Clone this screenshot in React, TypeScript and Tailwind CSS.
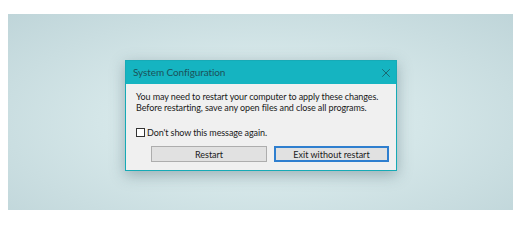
import { X } from "lucide-react";

function Dialog() {
  return (
    <div className="w-[272px] border border-[#16aab6] bg-[#f0f0f0] shadow-[0_4px_14px_rgba(40,70,80,0.35)]">
      {/* title bar */}
      <div className="flex h-[23px] items-center justify-between bg-[#15b4c1] pl-[7px] pr-[3px]">
        <span className="text-[10px] tracking-[-0.1px] text-[#1b525a]">System Configuration</span>
        <X size={14} strokeWidth={1.3} className="text-[#1b525a]" />
      </div>
      <div className="pl-[10px] pr-[7px] pt-[7px] pb-[8px] text-[#1a1a1a]">
        <p className="whitespace-nowrap text-[9px] leading-[11px] tracking-[-0.1px]">
          You may need to restart your computer to apply these changes.
          <br />
          Before restarting, save any open files and close all programs.
        </p>
        <label className="mt-[14px] flex items-center gap-[2px] whitespace-nowrap text-[9px] leading-[11px] tracking-[-0.1px]">
          <span className="h-[9px] w-[9px] border border-[#333] bg-white" />
          Don't show this message again.
        </label>
        <div className="mt-[8px] flex justify-end gap-[7px]">
          <button className="h-[16px] w-[116px] border border-[#adadad] bg-[#e1e1e1] text-[9px] leading-none text-[#1a1a1a]">
            Restart
          </button>
          <button className="h-[16px] w-[115px] border-2 border-[#2f7fcf] bg-[#e1e1e1] text-[9px] leading-none text-[#1a1a1a]">
            Exit without restart
          </button>
        </div>
      </div>
    </div>
  );
}

export default function App() {
  return (
    <div className="h-[224px] w-[530px] bg-white pt-[14px] pl-[8px] font-['Lato',sans-serif]">
      <div className="h-[196px] w-[505px] bg-[radial-gradient(ellipse_at_50%_55%,#e6f2f3_0%,#d4e6e8_45%,#bfd5d9_100%)] pt-[46px] pl-[117px]">
        <Dialog />
      </div>
    </div>
  );
}
